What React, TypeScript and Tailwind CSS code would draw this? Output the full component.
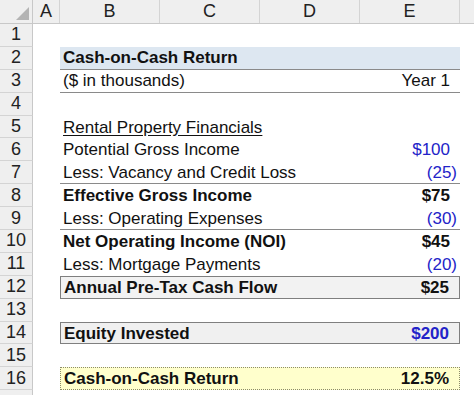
type Row = {
  n: number;
  label?: string;
  value?: string;
  bold?: boolean;
  blue?: boolean;
  neg?: boolean;
  underline?: boolean;
  box?: string;
};

const rows: Row[] = [
  { n: 1 },
  { n: 2, label: "Cash-on-Cash Return", bold: true, box: "bg-[#dde7f1] border-b border-[#8a8a8a]" },
  { n: 3, label: "($ in thousands)", value: "Year 1", box: "border-b border-[#8a8a8a]" },
  { n: 4 },
  { n: 5, label: "Rental Property Financials", underline: true },
  { n: 6, label: "Potential Gross Income", value: "$100", blue: true },
  { n: 7, label: "Less: Vacancy and Credit Loss", value: "(25)", blue: true, neg: true, box: "border-b border-[#8a8a8a]" },
  { n: 8, label: "Effective Gross Income", value: "$75", bold: true },
  { n: 9, label: "Less: Operating Expenses", value: "(30)", blue: true, neg: true, box: "border-b border-[#8a8a8a]" },
  { n: 10, label: "Net Operating Income (NOI)", value: "$45", bold: true },
  { n: 11, label: "Less: Mortgage Payments", value: "(20)", blue: true, neg: true },
  { n: 12, label: "Annual Pre-Tax Cash Flow", value: "$25", bold: true, box: "bg-[#f2f2f2] border border-[#7f7f7f]" },
  { n: 13 },
  { n: 14, label: "Equity Invested", value: "$200", bold: true, blue: true, box: "bg-[#f0f0f0] border border-[#7f7f7f]" },
  { n: 15 },
  { n: 16, label: "Cash-on-Cash Return", value: "12.5%", bold: true, box: "bg-[#ffffcc] border border-dotted border-[#8c8c6a]" },
];

const cols = [
  { k: "A", w: "w-[27px]" },
  { k: "B", w: "w-[100px]" },
  { k: "C", w: "w-[100px]" },
  { k: "D", w: "w-[100px]" },
  { k: "E", w: "w-[100px]" },
];

export default function App() {
  return (
    <div
      className="w-[474px] h-[395px] overflow-hidden bg-white text-[17px] text-[#111]"
      style={{ fontFamily: '"Liberation Sans", Arial, sans-serif' }}
    >
      {/* column headers */}
      <div className="flex h-[24px] bg-[#efefef] border-b border-[#c8c8c8] text-[18px]">
        <div className="relative w-[33px] shrink-0 border-r border-[#c8c8c8]">
          <div className="absolute right-[3px] bottom-[3px] w-0 h-0 border-l-[13px] border-l-transparent border-b-[13px] border-b-[#b4b4b4]" />
        </div>
        {cols.map((c) => (
          <div
            key={c.k}
            className={`${c.w} shrink-0 flex items-center justify-center border-r border-[#d4d4d4] text-[#222]`}
          >
            {c.k}
          </div>
        ))}
        <div className="flex-1" />
      </div>

      {rows.map((r) => (
        <div key={r.n} className="flex h-[22.9px]">
          <div className="w-[33px] shrink-0 flex items-center justify-center bg-[#efefef] border-r border-b border-[#d4d4d4] border-r-[#c8c8c8] text-[18px] text-[#222]">
            {r.n}
          </div>
          <div className="w-[27px] shrink-0" />
          <div
            className={`w-[400px] shrink-0 flex items-center justify-between leading-none ${r.box ?? ""} ${
              r.bold ? "font-bold" : ""
            }`}
          >
            <span className={`pl-[3px] ${r.underline ? "underline underline-offset-2" : ""}`}>
              {r.label}
            </span>
            {r.value && (
              <span
                className={`${r.neg ? "pr-[3px]" : "pr-[10px]"} ${r.blue ? "text-[#2323c8]" : ""}`}
              >
                {r.value}
              </span>
            )}
          </div>
          <div className="flex-1" />
        </div>
      ))}

      {/* partial row 17 */}
      <div className="flex h-[22.9px]">
        <div className="w-[33px] shrink-0 bg-[#efefef] border-r border-[#c8c8c8]" />
      </div>
    </div>
  );
}
